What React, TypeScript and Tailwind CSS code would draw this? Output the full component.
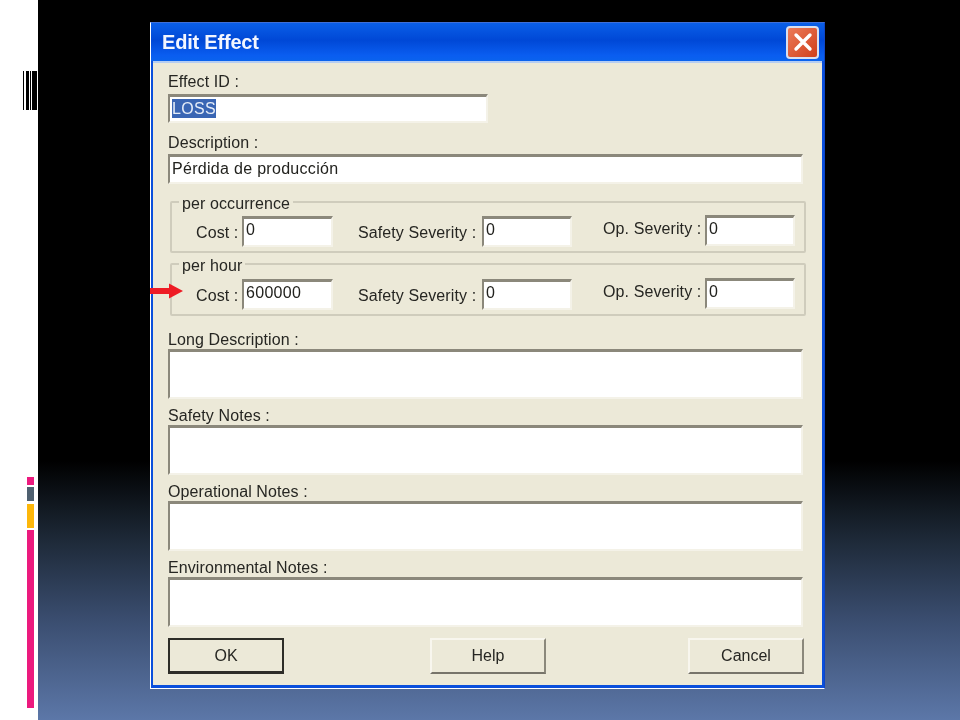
const font = "[font-family:'Liberation_Sans',Arial,sans-serif]";

function Field({ className, value, selected }: { className: string; value?: string; selected?: boolean }) {
  return (
    <div className={`shrink-0 bg-white border-t-[3px] border-l-[2px] border-b-[2px] border-r-[2px] border-t-[#8b887b] border-l-[#8b887b] border-b-[#f4f2e8] border-r-[#f4f2e8] pl-[2px] text-[16px] leading-[20px] tracking-[0.3px] text-[#22221e] ${className}`}>
      {selected ? <span className="inline-block bg-[#3a66b4] text-[#e6edf8] leading-[19px]">{value}</span> : value}
    </div>
  );
}

function Label({ children, className = "" }: { children: string; className?: string }) {
  return <div className={`h-[18px] text-[16px] leading-[16px] tracking-[0.1px] text-[#262622] whitespace-nowrap ${className}`}>{children}</div>;
}

function Group({ title, cost, className, rowClass }: { title: string; cost: string; className: string; rowClass: string }) {
  const text = "text-[16px] leading-[18px] tracking-[0.1px] text-[#262622] whitespace-nowrap";
  return (
    <fieldset className={`ml-[2px] w-[636px] border-2 border-[#cfccbc] rounded-[2px] pl-[24px] ${className}`}>
      <legend className={`-ml-[17px] px-[3px] translate-y-[2px] ${text}`}>{title}</legend>
      <div className={`flex items-start h-[32px] ${rowClass}`}>
        <span className={`w-[41px] mt-[8px] ${text}`}>Cost :</span>
        <Field className="ml-[5px] w-[91px] h-[31px] pt-[1px]" value={cost} />
        <span className={`ml-[25px] w-[119px] mt-[8px] ${text}`}>Safety Severity :</span>
        <Field className="ml-[5px] w-[90px] h-[31px] pt-[1px]" value="0" />
        <span className={`ml-[31px] w-[97px] mt-[4px] ${text}`}>Op. Severity :</span>
        <Field className="ml-[5px] w-[90px] h-[31px] -mt-[1px] pt-[1px]" value="0" />
      </div>
    </fieldset>
  );
}

function Note({ label, className = "" }: { label: string; className?: string }) {
  return (
    <div className={className}>
      <Label>{label}</Label>
      <Field className="-mt-[1px] w-[635px] h-[50px]" />
    </div>
  );
}

function WinButton({ label, isDefault, className = "" }: { label: string; isDefault?: boolean; className?: string }) {
  return (
    <button
      className={`w-[116px] h-[36px] bg-[#ece9d8] text-[16px] text-[#262622] ${isDefault ? "border-2 border-[#2e2d28] border-b-[3px]" : "border-2 border-t-[#f8f6ee] border-l-[#f8f6ee] border-r-[#8b887b] border-b-[#77746a]"} ${className}`}
    >
      {label}
    </button>
  );
}

export default function App() {
  return (
    <div className={`w-[960px] h-[720px] flex overflow-hidden ${font}`}>
      <aside className="w-[38px] h-full bg-white flex flex-col items-end">
        <div className="mt-[71px] mr-[1px] flex h-[39px] w-[14px]">
          <div className="w-[1px] bg-black" />
          <div className="w-[2px]" />
          <div className="w-[3px] bg-black" />
          <div className="w-[1px]" />
          <div className="w-[1px] bg-black" />
          <div className="w-[1px]" />
          <div className="w-[5px] bg-black" />
        </div>
        <div className="mt-[367px] mr-[4px] w-[7px] flex flex-col">
          <div className="h-[8px] bg-[#ec1a7e]" />
          <div className="h-[14px] mt-[2px] bg-[#4f6070]" />
          <div className="h-[24px] mt-[3px] bg-[#fdb70a]" />
          <div className="h-[178px] mt-[2px] bg-[#ec1a7e]" />
        </div>
      </aside>

      <main className="relative flex-1 h-full bg-[linear-gradient(to_bottom,#000000_0%,#000000_64%,#1b2633_74%,#3a4d6f_86%,#5c77a8_100%)] pt-[22px] pl-[112px]">
        <section className="w-[675px] h-[667px] blur-[0.4px] border border-l-white border-b-white border-t-[#3f6fd8] border-r-[#0d45c8] bg-[#0a4fdc] flex flex-col">
          <header className="h-[38px] shrink-0 flex items-center justify-between pl-[11px] pr-[5px] bg-[linear-gradient(to_bottom,#0a5fe8_0%,#0048d6_45%,#0a5df0_85%,#0a63ee_100%)]">
            <h1 className="text-[20px] font-bold tracking-[-0.2px] text-[#f2f6ff] leading-none">Edit Effect</h1>
            <div className="w-[33px] h-[33px] rounded-[4px] border-2 border-[#d9dff0] bg-[linear-gradient(135deg,#ec7a58,#d0401c)] flex items-center justify-center">
              <svg viewBox="0 0 24 24" className="w-[24px] h-[24px]" fill="none" stroke="#fff" strokeWidth="3.4" strokeLinecap="round">
                <path d="M5 5 L19 19 M19 5 L5 19" />
              </svg>
            </div>
          </header>

          <div className="flex-1 mx-[2px] mb-[3px] border-t-2 border-t-[#b5cdf2] bg-[#ece9d8] pl-[15px] flex flex-col">
            <Label className="mt-[11px]">Effect ID :</Label>
            <Field className="mt-[2px] w-[320px] h-[29px] pt-[2px]" value="LOSS" selected />
            <Label className="mt-[12px]">Description :</Label>
            <Field className="mt-[1px] w-[635px] h-[30px] pt-[2px]" value="Pérdida de producción" />
            <Group title="per occurrence" cost="0" className="mt-[9px] h-[60px]" rowClass="mt-[5px]" />
            <Group title="per hour" cost="600000" className="mt-[2px] h-[61px]" rowClass="mt-[6px]" />
            <Note label="Long Description :" className="mt-[16px]" />
            <Note label="Safety Notes :" className="mt-[9px]" />
            <Note label="Operational Notes :" className="mt-[9px]" />
            <Note label="Environmental Notes :" className="mt-[9px]" />
            <div className="mt-[11px] w-[636px] flex">
              <WinButton label="OK" isDefault />
              <WinButton label="Help" className="ml-[146px]" />
              <WinButton label="Cancel" className="ml-[142px]" />
            </div>
          </div>
        </section>

        <svg viewBox="0 0 34 16" className="absolute left-[112px] top-[283px] w-[34px] h-[16px]">
          <path d="M0 5 H19 V0.5 L33 8 L19 15.5 V11 H0 Z" fill="#ee1c25" />
        </svg>
      </main>
    </div>
  );
}
